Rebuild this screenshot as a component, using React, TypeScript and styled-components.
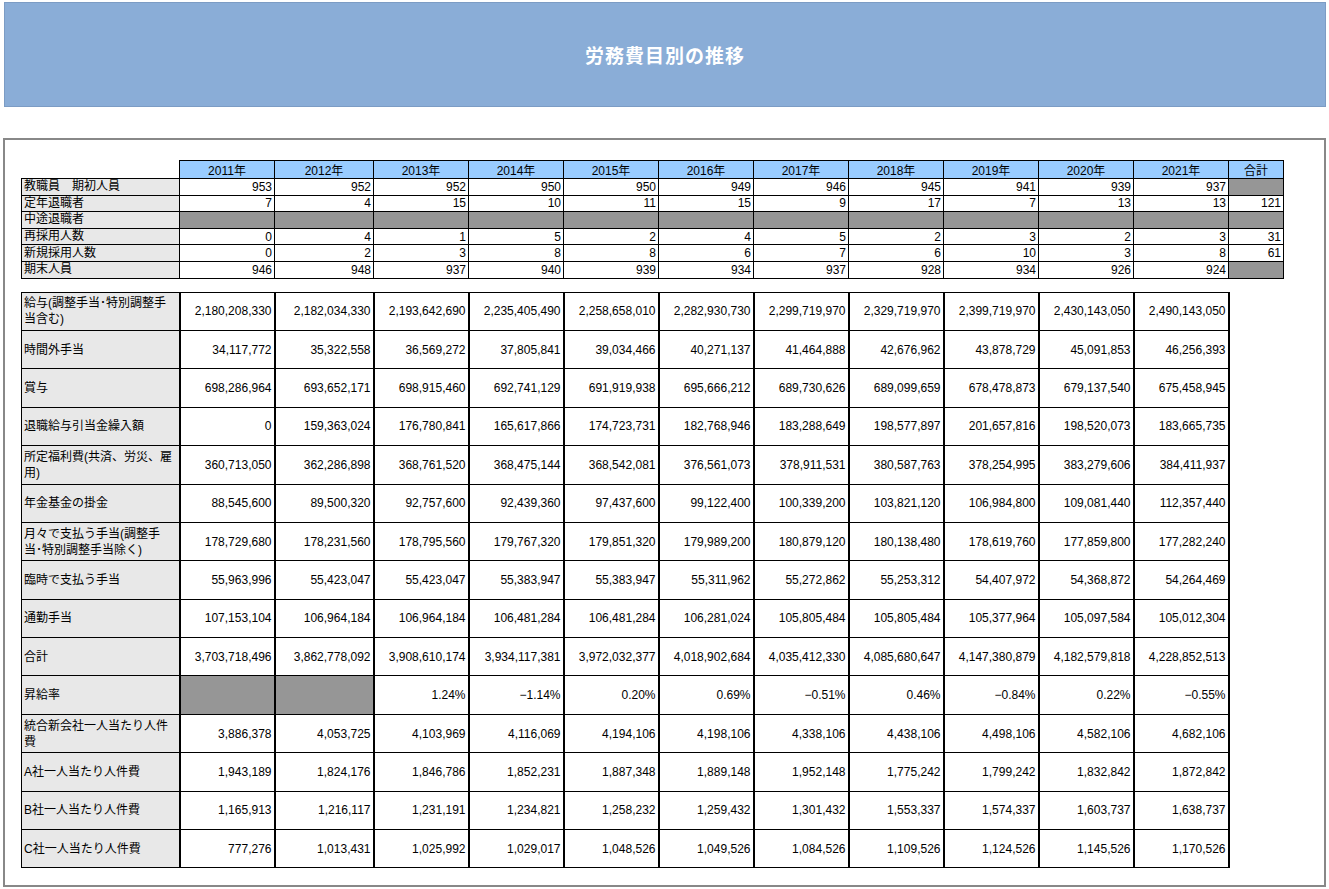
import React from "react";
import styled, { createGlobalStyle } from "styled-components";

const Global = createGlobalStyle`
  body { margin: 0; background: #fff; font-family: "Liberation Sans", "Noto Sans CJK JP", sans-serif; }
`;

const Page = styled.div`
  width: 1329px; height: 889px; padding: 2px 3px 0 4px; box-sizing: border-box;
`;
const Banner = styled.div`
  height: 105px; background: #8aadd7; border: 1px solid #7c9cc4; box-sizing: border-box;
  display: flex; align-items: center; justify-content: center;
  color: #fff; font-weight: bold; font-size: 19px; letter-spacing: 1px;
  font-family: "Noto Sans CJK JP", sans-serif;
`;
const Frame = styled.div`
  margin: 31px 0 0 -1px; height: 749px; border: 2px solid #888; box-sizing: border-box;
  padding: 20px 0 0 16px;
`;
const Table = styled.table`
  border-collapse: collapse; table-layout: fixed; font-size: 12px; color: #000;
`;
const stipple = `background-color:#e8e8e8;background-image:radial-gradient(#b8b8b8 0.6px, transparent 0.7px);background-size:2px 2px;`;
const Th = styled.th`
  background: #99ccff; border: 1px solid #000; font-weight: normal;
  height: 16px; padding: 0; text-align: center;
`;
const Blank = styled.th`border: none; background: none;`;
const Label = styled.td<{ $thick?: boolean }>`
  ${stipple} border: 1px solid #000; padding: 0 2px; text-align: left; line-height: 15px;
  ${p => p.$thick ? "border-width: 1px 2px 1px 1px; line-height:16px;" : ""}
`;
const Cell = styled.td<{ $gray?: boolean; $thick?: boolean }>`
  border: 1px solid #000; ${p => p.$thick ? "border-left-width:2px;border-right-width:2px;" : ""}
  text-align: right; padding: 0 2px; height: 15px;
  background: ${p => (p.$gray ? "#969696" : "#fff")};
`;
const BRow = styled.tr`height: 38.4px;`;
const Spacer = styled.tr`height: 14px;`;

const years = Array.from({ length: 11 }, (_, i) => `${2011 + i}年`);
const widths = [95, 99, 95, 95, 95, 95, 95, 95, 95, 95, 95];

const top: [string, (string | null)[], string | null][] = [
  ["教職員　期初人員", ["953","952","952","950","950","949","946","945","941","939","937"], null],
  ["定年退職者", ["7","4","15","10","11","15","9","17","7","13","13"], "121"],
  ["中途退職者", Array(11).fill(null), null],
  ["再採用人数", ["0","4","1","5","2","4","5","2","3","2","3"], "31"],
  ["新規採用人数", ["0","2","3","8","8","6","7","6","10","3","8"], "61"],
  ["期末人員", ["946","948","937","940","939","934","937","928","934","926","924"], null],
];

const bottom: [string, (string | null)[]][] = [
  ["給与(調整手当･特別調整手当含む)", ["2,180,208,330","2,182,034,330","2,193,642,690","2,235,405,490","2,258,658,010","2,282,930,730","2,299,719,970","2,329,719,970","2,399,719,970","2,430,143,050","2,490,143,050"]],
  ["時間外手当", ["34,117,772","35,322,558","36,569,272","37,805,841","39,034,466","40,271,137","41,464,888","42,676,962","43,878,729","45,091,853","46,256,393"]],
  ["賞与", ["698,286,964","693,652,171","698,915,460","692,741,129","691,919,938","695,666,212","689,730,626","689,099,659","678,478,873","679,137,540","675,458,945"]],
  ["退職給与引当金繰入額", ["0","159,363,024","176,780,841","165,617,866","174,723,731","182,768,946","183,288,649","198,577,897","201,657,816","198,520,073","183,665,735"]],
  ["所定福利費(共済、労災、雇用)", ["360,713,050","362,286,898","368,761,520","368,475,144","368,542,081","376,561,073","378,911,531","380,587,763","378,254,995","383,279,606","384,411,937"]],
  ["年金基金の掛金", ["88,545,600","89,500,320","92,757,600","92,439,360","97,437,600","99,122,400","100,339,200","103,821,120","106,984,800","109,081,440","112,357,440"]],
  ["月々で支払う手当(調整手当･特別調整手当除く)", ["178,729,680","178,231,560","178,795,560","179,767,320","179,851,320","179,989,200","180,879,120","180,138,480","178,619,760","177,859,800","177,282,240"]],
  ["臨時で支払う手当", ["55,963,996","55,423,047","55,423,047","55,383,947","55,383,947","55,311,962","55,272,862","55,253,312","54,407,972","54,368,872","54,264,469"]],
  ["通勤手当", ["107,153,104","106,964,184","106,964,184","106,481,284","106,481,284","106,281,024","105,805,484","105,805,484","105,377,964","105,097,584","105,012,304"]],
  ["合計", ["3,703,718,496","3,862,778,092","3,908,610,174","3,934,117,381","3,972,032,377","4,018,902,684","4,035,412,330","4,085,680,647","4,147,380,879","4,182,579,818","4,228,852,513"]],
  ["昇給率", [null,null,"1.24%","−1.14%","0.20%","0.69%","−0.51%","0.46%","−0.84%","0.22%","−0.55%"]],
  ["統合新会社一人当たり人件費", ["3,886,378","4,053,725","4,103,969","4,116,069","4,194,106","4,198,106","4,338,106","4,438,106","4,498,106","4,582,106","4,682,106"]],
  ["A社一人当たり人件費", ["1,943,189","1,824,176","1,846,786","1,852,231","1,887,348","1,889,148","1,952,148","1,775,242","1,799,242","1,832,842","1,872,842"]],
  ["B社一人当たり人件費", ["1,165,913","1,216,117","1,231,191","1,234,821","1,258,232","1,259,432","1,301,432","1,553,337","1,574,337","1,603,737","1,638,737"]],
  ["C社一人当たり人件費", ["777,276","1,013,431","1,025,992","1,029,017","1,048,526","1,049,526","1,084,526","1,109,526","1,124,526","1,145,526","1,170,526"]],
];

export default function App() {
  return (
    <Page>
      <Global />
      <Banner>労務費目別の推移</Banner>
      <Frame>
        <Table>
          <colgroup>
            <col style={{ width: 158 }} />
            {widths.map((w, i) => <col key={i} style={{ width: w }} />)}
            <col style={{ width: 55 }} />
          </colgroup>
          <tbody>
            <tr>
              <Blank />
              {years.map(y => <Th key={y}>{y}</Th>)}
              <Th>合計</Th>
            </tr>
            {top.map(([l, vals, tot]) => (
              <tr key={l} style={{ height: 16.6 }}>
                <Label>{l}</Label>
                {vals.map((v, i) => <Cell key={i} $gray={v === null}>{v}</Cell>)}
                <Cell $gray={tot === null}>{tot}</Cell>
              </tr>
            ))}
            <Spacer><td colSpan={13} /></Spacer>
            {bottom.map(([l, vals]) => (
              <BRow key={l}>
                <Label $thick>{l}</Label>
                {vals.map((v, i) => <Cell key={i} $thick $gray={v === null}>{v}</Cell>)}
              </BRow>
            ))}
          </tbody>
        </Table>
      </Frame>
    </Page>
  );
}
